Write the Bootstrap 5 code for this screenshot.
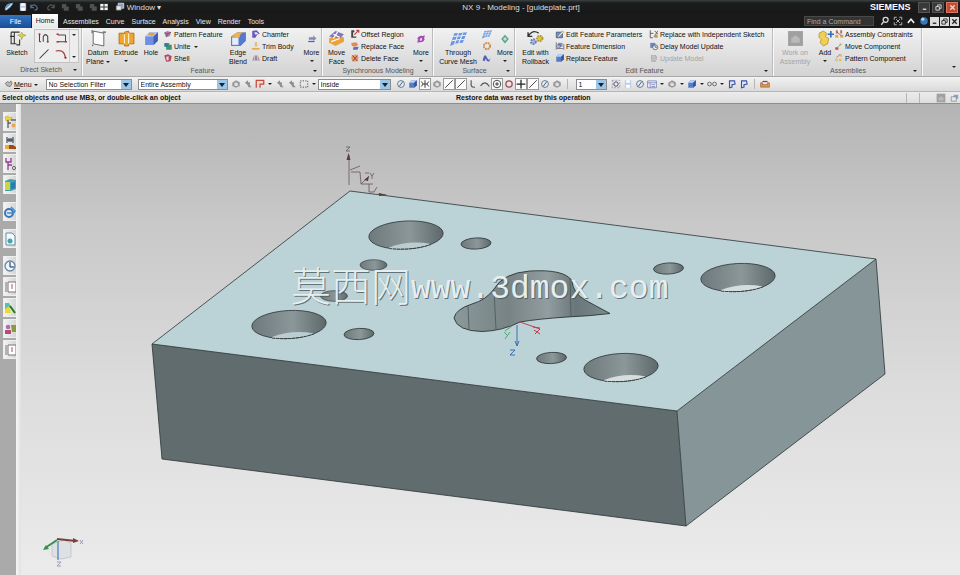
<!DOCTYPE html>
<html lang="en">
<head>
<meta charset="utf-8">
<meta name="viewport" content="width=device-width, initial-scale=1">
<title>NX 9 - Modeling - [guideplate.prt]</title>
<link href="https://cdn.jsdelivr.net/npm/bootstrap@5.3.0/dist/css/bootstrap.min.css" rel="stylesheet">
<style>
body{font-family:"Liberation Sans",Arial,sans-serif;font-size:7px;line-height:9px;color:#111;background:#ababab}
button,select,input{font:inherit;color:inherit;border:0;background:none;padding:0;border-radius:0}
button{white-space:nowrap}
svg.ic{width:10px;height:10px;flex:none;display:block}
svg.ic-l{width:17px;height:17px;flex:none;display:block}
.titlebar{height:14px;background:linear-gradient(#3c4346,#1c1c1c 20%,#181818);color:#ddd;font-size:8px}
.quick{width:172px;padding-left:2px}
.quick button{width:14px;display:flex;justify-content:center}
.quick .wide{width:48px;gap:2px;align-items:center}
.brand{font-size:9px;font-weight:bold;color:#fff;width:48px}
.winbtn{width:12px;height:11px;background:#393939;border:1px solid #555;display:grid;place-items:center;margin-right:2px}
.winbtn.closer{background:#c64a31;border-color:#d8795e}
.tabrow{height:14px;background:#1a1a1a;color:#e6e6e6}
.tabrow a{color:inherit;text-decoration:none;height:13px;line-height:14px;margin-right:7px}
.tabrow .file-tab{background:linear-gradient(#3474c0,#174f98);width:31px;text-align:center;margin-right:1px;color:#fff}
.tabrow .home-tab{background:linear-gradient(#fff,#e8e8e8);color:#111;width:26px;text-align:center;height:14px;margin-right:5px}
.finder{width:70px;height:10px;background:#333;color:#aaa;border:1px solid #484848;padding:0 2px}
.finder::placeholder{color:#aaa;opacity:1}
.tabrow .tool{width:13px;display:grid;place-items:center}
.tabrow .mdi{width:9px;height:9px;margin-right:1px;background:#ddd;display:grid;place-items:center}
.ribbon{height:49px;background:linear-gradient(#f1f1f1,#dfdfe0 60%,#d3d3d4);border-bottom:1px solid #a9a9a9}
.grp{border-right:1px solid #fafafa;box-shadow:inset -1px 0 #bcbcbc;display:flex;flex-direction:column;flex:none}
.grp-body{display:grid;height:37px}
.grp-name{text-align:center;color:#555;position:relative;line-height:12px}
.grp-name::after,.dd::after{content:"";display:inline-block;border:2px solid transparent;border-top-color:#222;border-bottom:0}
.grp-name::after{position:absolute;right:5px;top:5px}
.g-sketch{width:83px}.g-sketch .grp-body{grid-template-columns:34px 45px}
.g-feature{width:240px}.g-feature .grp-body{grid-template-columns:30px 26px 24px 62px 26px 50px 21px}
.g-sync{width:111px}.g-sync .grp-body{grid-template-columns:27px 60px 22px}
.g-surface{width:82px}.g-surface .grp-body{grid-template-columns:48px 13px 20px}
.g-edit{width:258px}.g-edit .grp-body{grid-template-columns:39px 94px 122px}
.g-asm{width:149px}.g-asm .grp-body{grid-template-columns:42px 18px 87px}
.big{display:flex;flex-direction:column;align-items:center;padding-top:2px;line-height:9px}
.big .ic-l{margin-bottom:1px}
.big .ic{margin:4px}
.big .cap{white-space:pre-line;text-align:center}
.dd::after{margin-left:2px;vertical-align:1px}
.under::after{content:"";border:2px solid transparent;border-top-color:#222;border-bottom:0;margin-top:3px}
.small-col{display:flex;flex-direction:column}
.small-col button{display:flex;align-items:center;height:12px;gap:1px;text-align:left}
.off{color:#a4a4a4}
.gallery{border:1px solid #c2c2c2;margin:1px 0;display:grid;grid-template-columns:17px 17px 9px;background:#ededed}
.gallery button{display:grid;place-items:center}
.gallery .scroller{grid-row:span 2;border-left:1px solid #ccc;display:flex;flex-direction:column;justify-content:space-around;align-items:center}
.selbar{height:15px;background:linear-gradient(#f2f2f2,#dadada);border-bottom:1px solid #b5b5b5}
.selbar .bi{width:12px;height:12px;display:grid;place-items:center;flex:none}
.selbar .boxed{background:#fafafa;border:1px solid #999}
.selbar .gapdd{width:8px;height:12px;flex:none;display:grid;place-items:center}
.gapdd::after{content:"";border:2px solid transparent;border-top-color:#222;border-bottom:0}
.selbar .pick{height:11px;line-height:9px;border:1px solid #8c8c8c;padding:0 12px 0 2px;appearance:none;flex:none;
background:#fff url("data:image/svg+xml,%3Csvg xmlns='http://www.w3.org/2000/svg' width='10' height='9'%3E%3Crect width='10' height='9' fill='%239cc5e6'/%3E%3Cpath d='M2 3h6l-3 4z' fill='%23123'/%3E%3C/svg%3E") right center no-repeat}
.p-filter{width:86px;margin-left:5px}.p-scope{width:90px;margin:0 2px 0 6px}.p-inside{width:73px;margin:0 4px 0 0}.p-num{width:31px;margin:0 3px 0 4px}
.vsep{width:1px;height:10px;background:#b5b5b5;margin:0 4px;flex:none}
.prompt{height:12px;background:linear-gradient(#ececec,#dedede);font-weight:bold;border-bottom:1px solid #8e8e8e}
.prompt>*{flex:1 1 0}.prompt .status{flex:1.11 1 0}
.prompt .hint{padding-left:2px}
.workarea{min-height:0}
.rail{width:16px;background:#aaa;padding:8px 0 0 3px;flex:none}
.rail button{width:13px;height:19px;margin-bottom:2px;background:linear-gradient(90deg,#f3f3f3,#d5d5d5);border:1px solid #eee;border-right:0;display:grid;place-items:center}
.rail .spaced{margin-bottom:8px}
.rail svg.ic{width:12px;height:14px}
.edge-strip{width:5px;background:linear-gradient(90deg,#f6f6f6,#e0e0e0);flex:none}
.view{background:linear-gradient(#b4b4b4,#c8c8c8 25%,#dcdcdc 60%,#ebebeb);min-width:0}
.view svg{width:100%;height:100%;display:block}
.wm-cjk{font-family:"Noto Sans CJK SC",sans-serif;font-size:40px;font-weight:300}
.wm-latin{font-family:"Liberation Mono","Courier New",monospace;font-size:33px}
</style>
<script src="https://cdn.jsdelivr.net/npm/bootstrap@5.3.0/dist/js/bootstrap.bundle.min.js"></script>
</head>
<body class="vh-100 d-flex flex-column overflow-hidden">
<svg class="d-none" aria-hidden="true">
<symbol id="sketch" viewBox="0 0 16 16"><path d="M2 2h8M2 2v11h5M5 2v11M1 6h4M10 9v5H7" fill="none" stroke="#333"/><path d="M12 2l1 2 3 1-3 1-1 3-1-3-3-1 3-1z" fill="#e3d33d" stroke="#99902b" stroke-width=".5"/></symbol>
<symbol id="profile" viewBox="0 0 16 16"><path d="M2 13V3M2 13h2M7 13V6q3-5 6 0v7" fill="none" stroke="#444" stroke-width="1.4"/><circle cx="2" cy="3" r="1.4" fill="#a33"/><circle cx="13" cy="13" r="1.4" fill="#a33"/></symbol>
<symbol id="rect" viewBox="0 0 16 16"><path d="M4 4h10v9H3" fill="none" stroke="#444" stroke-width="1.3"/><path d="M2 3h3M2 13h3M13 13h3" stroke="#b33" stroke-width="2"/></symbol>
<symbol id="line" viewBox="0 0 16 16"><path d="M2 14L14 2" stroke="#333" stroke-width="1.4"/></symbol>
<symbol id="arc" viewBox="0 0 16 16"><path d="M1 4q11-3 13 9" fill="none" stroke="#a44" stroke-width="1.6"/><circle cx="14" cy="13" r="1.4" fill="#722"/></symbol>
<symbol id="plane" viewBox="0 0 16 16"><path d="M3 1l10 2v12L3 13z" fill="#fbfbfb" stroke="#555" stroke-width=".8"/><path d="M2 0v3M12 2h3M3 14l-1 1" stroke="#555"/></symbol>
<symbol id="extrude" viewBox="0 0 16 16"><path d="M1 3h4l1 1V2l4-1v2h5v10h-5v2H6v-2H1z" fill="#eea62d" stroke="#b16910" stroke-width=".8"/><path d="M6 4v9M10 3v10" stroke="#fff3d6"/></symbol>
<symbol id="hole" viewBox="0 0 16 16"><path d="M2 6l4-4h8v8l-4 4H2z" fill="#6f8fe0"/><path d="M2 6l4-4h8l-4 4z" fill="#bccbf4"/><path d="M10 6l4-4v8l-4 4z" fill="#3f5fb5"/><ellipse cx="8" cy="4" rx="3" ry="1.3" fill="#e5a23a"/></symbol>
<symbol id="gem" viewBox="0 0 16 16"><path d="M2 6l5-3 6 2-2 6-6 2z" fill="#a9799c"/><path d="M2 6l5 2 6-3M7 8l-2 5" stroke="#5b4155" fill="none"/></symbol>
<symbol id="unite" viewBox="0 0 16 16"><path d="M2 3h8v3h4v8H5V9H2z" fill="#3d9473"/><path d="M3 4h5v5H3z" fill="#446fb5"/></symbol>
<symbol id="shell" viewBox="0 0 16 16"><path d="M2 4l6-2 6 3-2 8-7 1z" fill="#ae4a66"/><path d="M5 6l4-1v6l-3 1z" fill="#f3d4da"/></symbol>
<symbol id="blend" viewBox="0 0 16 16"><path d="M1 6l6-4h8v8l-5 5H1z" fill="#5379d3"/><path d="M1 6l6-4h8q-6 0-6 5z" fill="#edb44c"/><path d="M2 7h6v7H2z" fill="#e4ecfc"/></symbol>
<symbol id="chamfer" viewBox="0 0 16 16"><path d="M2 14V3l7-1 5 5-4 2-3 5z" fill="#6a58b8"/><path d="M5 5h4l3 3-5 1z" fill="#e6e1ff"/></symbol>
<symbol id="trim" viewBox="0 0 16 16"><path d="M6 2h4v7H6z" fill="#dec17f"/><path d="M1 11h14l-3 3H2z" fill="#e4ad52"/></symbol>
<symbol id="draft" viewBox="0 0 16 16"><path d="M2 12l3-8h6l3 8z" fill="#9b8799"/><path d="M6 4l-1 8M10 4l1 8" stroke="#f3e8f0"/></symbol>
<symbol id="moreblue" viewBox="0 0 16 16"><path d="M3 5h7V2l5 5-5 4V9H3z" fill="#7d8dc4"/><path d="M2 12h10" stroke="#6a5592" stroke-width="2"/></symbol>
<symbol id="moreviolet" viewBox="0 0 16 16"><path d="M2 8q2-6 9-5l3-1-1 6H9l1-2q-4 0-4 4zM14 8q-2 6-9 5l-3 1 1-5h4l-1 2q4 0 4-3z" fill="#a54ab4"/></symbol>
<symbol id="moregreen" viewBox="0 0 16 16"><path d="M8 1l6 7-6 7-6-7z" fill="#57a386"/><path d="M8 5v6M5 8h6" stroke="#e9fff4" stroke-width="1.5"/></symbol>
<symbol id="moveface" viewBox="0 0 16 16"><path d="M1 8l7-4 7 3v4l-8 4-6-3z" fill="#eaa33c"/><path d="M1 6l6-5 8 3-4 4z" fill="#8174bd"/><path d="M5 4l6 3M9 2L5 8M3 11l8-3" stroke="#fff" stroke-width="1.2"/></symbol>
<symbol id="offset" viewBox="0 0 16 16"><path d="M2 2h5v3H5v7h5v2H2z" fill="#444"/><path d="M7 9l6-6M10 2h4v4" stroke="#c74340" stroke-width="2" fill="none"/></symbol>
<symbol id="repface" viewBox="0 0 16 16"><path d="M2 3l8-1 3 4-4 3-6-1z" fill="#dd8b50"/><path d="M5 10l9-1-2 5H5z" fill="#5e6fba"/></symbol>
<symbol id="delface" viewBox="0 0 16 16"><path d="M3 4l7-2 4 5-2 6-7 1-3-5z" fill="#de9d6b"/><path d="M4 4l8 9M12 4l-8 9" stroke="#9d352c" stroke-width="1.5"/></symbol>
<symbol id="mesh" viewBox="0 0 16 16"><path d="M4 3q6 0 12-1l-4 10q-6 0-12 3z" fill="#6d95da"/><path d="M3 6q6 0 12-1M2 10q6-1 11-1M8 3L4 14M12 3L8 13" stroke="#e5efff" fill="none"/></symbol>
<symbol id="patch" viewBox="0 0 16 16"><circle cx="8" cy="8" r="5" fill="none" stroke="#d08b52" stroke-width="3" stroke-dasharray="3 1"/></symbol>
<symbol id="wave" viewBox="0 0 16 16"><path d="M1 12q3-14 7-5t7-4l-3 10q-4 2-6-4l-2 4z" fill="#5760b9"/></symbol>
<symbol id="rollback" viewBox="0 0 16 16"><path d="M1 2v4h4M1 6q4-7 10-3" fill="none" stroke="#333" stroke-width="1.3"/><circle cx="12" cy="8" r="2.500" fill="#e3c83f" stroke="#b39a33" stroke-dasharray="1.500 .8" stroke-width="2"/><circle cx="6" cy="11" r="2.200" fill="#a9bde4" stroke="#6a80b5" stroke-dasharray="1.500 .8" stroke-width="2"/></symbol>
<symbol id="cube" viewBox="0 0 16 16"><path d="M2 6l4-4h8v8l-4 4H2z" fill="#537dc5"/><path d="M2 6l4-4h8l-4 4z" fill="#bdd3f4"/><path d="M10 6v8l4-4V2z" fill="#33559a"/></symbol>
<symbol id="editp" viewBox="0 0 16 16"><path d="M2 5h10v9H2z" fill="#6893d2" stroke="#345"/><path d="M4 12l8-9 2 2-8 8z" fill="#f5f0d1" stroke="#555" stroke-width=".7"/></symbol>
<symbol id="dim" viewBox="0 0 16 16"><path d="M2 2v12M14 5v9M3 12h10" stroke="#445"/><path d="M5 3h7v6H5z" fill="#7993c9"/><circle cx="6" cy="8" r="3" fill="none" stroke="#556"/></symbol>
<symbol id="indep" viewBox="0 0 16 16"><path d="M2 2v12h4M2 7h5M9 3l5 5M14 3L8 13" stroke="#555" stroke-width="1.4" fill="none"/><path d="M9 9h5v5H9z" fill="#c99b57"/></symbol>
<symbol id="delay" viewBox="0 0 16 16"><path d="M2 3h8v8H2z" fill="#6b86bd"/><circle cx="10" cy="10" r="4" fill="#e6eaf5" stroke="#345"/><path d="M10 7v3h3" stroke="#333" fill="none"/></symbol>
<symbol id="update" viewBox="0 0 16 16"><path d="M3 3h8l2 4-2 7H4z" fill="#aaa"/><path d="M4 5h6M5 8h7M5 11h6" stroke="#eee"/></symbol>
<symbol id="workon" viewBox="0 0 16 16"><path d="M1 1h14v14H1z" fill="#a0a0a0"/><path d="M4 8l4-3 4 3v4H4z" fill="#b9b9b9"/></symbol>
<symbol id="add" viewBox="0 0 16 16"><path d="M2 3l4-2 3 2-1 3 3 2-1 5-4 2-3-3 1-3-2-2z" fill="#efd055" stroke="#ad8a23" stroke-width=".7"/><path d="M10 4h6M13 1v6" stroke="#346fb9" stroke-width="1.6"/></symbol>
<symbol id="constr" viewBox="0 0 16 16"><path d="M3 2h3v5H3zM10 2h3v5h-3z" fill="#c26657"/><path d="M2 9h5v5H2zM10 9h5v5h-5z" fill="#d9ad5d"/><path d="M5 5l7 6" stroke="#444"/></symbol>
<symbol id="movec" viewBox="0 0 16 16"><path d="M2 10h5v4H2z" fill="#c55249"/><path d="M9 4h3v3H9z" fill="#d6a44f"/><path d="M6 10l4-4" stroke="#777"/></symbol>
<symbol id="pattc" viewBox="0 0 16 16"><path d="M2 9h4v4H2zM8 9h4v4H8zM9 2h4v4H9z" fill="#e3be61"/><path d="M4 7l6-5" stroke="#b36" stroke-width="1"/></symbol>
<symbol id="save" viewBox="0 0 16 16"><path d="M3 2h10v12H3z" fill="#b9cde9"/><path d="M5 2h6v4H5zM5 9h6v5H5z" fill="#fff"/></symbol>
<symbol id="logo" viewBox="0 0 16 16"><path d="M1 12q1-9 8-10l6-1-5 8-7 5z" fill="#5c94be"/><path d="M3 12L13 3" stroke="#d7eef9" stroke-width="2"/></symbol>
<symbol id="undo" viewBox="0 0 16 16"><path d="M3 4v5h5M3 8q5-6 9-1t-3 6" fill="none" stroke="#4d7190" stroke-width="2"/></symbol>
<symbol id="redo" viewBox="0 0 16 16"><path d="M13 4v5H8M13 8Q8 2 4 7t3 6" fill="none" stroke="#555" stroke-width="2"/></symbol>
<symbol id="dark" viewBox="0 0 16 16"><path d="M3 3h7v4h4v7H6v-4H3z" fill="#505050"/></symbol>
<symbol id="grid" viewBox="0 0 16 16"><path d="M2 3h12v10H2z" fill="#f4f4f4"/><path d="M8 3v10M2 8h12" stroke="#333" stroke-width="1.6"/></symbol>
<symbol id="win" viewBox="0 0 16 16"><path d="M5 2h9v8H5z" fill="#8da4c8" stroke="#fff"/><path d="M2 6h8v7H2z" fill="#e7e7e7" stroke="#777"/></symbol>
<symbol id="find" viewBox="0 0 16 16"><circle cx="9" cy="6" r="4" fill="none" stroke="#ddd" stroke-width="2"/><path d="M6 9l-4 5" stroke="#ddd" stroke-width="2"/></symbol>
<symbol id="full" viewBox="0 0 16 16"><path d="M2 6V2h4M10 2h4v4M14 10v4h-4M6 14H2v-4M5 5l6 6M11 5l-6 6" stroke="#bbb" stroke-width="1.5" fill="none"/></symbol>
<symbol id="up" viewBox="0 0 16 16"><path d="M3 11l5-6 5 6" stroke="#eee" stroke-width="2.5" fill="none"/></symbol>
<symbol id="help" viewBox="0 0 16 16"><circle cx="8" cy="8" r="6" fill="#3b76b8"/><circle cx="6" cy="5" r="2.5" fill="#aed6f8"/></symbol>
<symbol id="min" viewBox="0 0 16 16"><path d="M4 12h8" stroke="currentColor" stroke-width="3"/></symbol>
<symbol id="rest" viewBox="0 0 16 16"><path d="M6 6V2h8v8h-4M2 6h8v8H2z" fill="none" stroke="currentColor" stroke-width="2"/></symbol>
<symbol id="x" viewBox="0 0 16 16"><path d="M3 3l10 10M13 3L3 13" stroke="currentColor" stroke-width="3"/></symbol>
<symbol id="menu" viewBox="0 0 16 16"><path d="M2 7l4-3 3 2 2-3 2 4-3 5-5-1z" fill="#bbb" stroke="#555"/></symbol>
<symbol id="graypart" viewBox="0 0 16 16"><path d="M2 6l6-4 6 3v6l-6 3-6-3z" fill="#999"/><path d="M5 7l3-2 3 2v4H6z" fill="#ddd"/></symbol>
<symbol id="grayarrow" viewBox="0 0 16 16"><path d="M3 6l5-4v3h3v5l3 3H9L7 9z" fill="#8e8e8e"/></symbol>
<symbol id="redsel" viewBox="0 0 16 16"><path d="M2 14V2h12v6H8v6" fill="#f5dad3" stroke="#c9483b" stroke-width="2"/></symbol>
<symbol id="dash" viewBox="0 0 16 16"><path d="M2 3h12v10H2z" fill="none" stroke="#555" stroke-dasharray="2 2" stroke-width="1.6"/></symbol>
<symbol id="dial" viewBox="0 0 16 16"><circle cx="8" cy="8" r="5.5" fill="#e1edf8" stroke="#678" stroke-width="1.5"/><path d="M5 12l6-8" stroke="#456" stroke-width="1.5"/></symbol>
<symbol id="snap" viewBox="0 0 16 16"><path d="M2 4l3 4-3 4M14 4l-3 4 3 4M8 2v12M5 8h6" fill="none" stroke="#333" stroke-width="1.5"/></symbol>
<symbol id="hook" viewBox="0 0 16 16"><path d="M5 2v8q1 4 6 3" fill="none" stroke="#555" stroke-width="1.8"/></symbol>
<symbol id="hill" viewBox="0 0 16 16"><path d="M1 11q7-10 14 1" fill="none" stroke="#555" stroke-width="1.8"/></symbol>
<symbol id="center" viewBox="0 0 16 16"><circle cx="8" cy="8" r="6" fill="none" stroke="#444" stroke-width="1.5"/><path d="M8 5v6M5 8h6" stroke="#333" stroke-width="1.5"/></symbol>
<symbol id="ring" viewBox="0 0 16 16"><circle cx="8" cy="8" r="5" fill="none" stroke="#a64454" stroke-width="2"/></symbol>
<symbol id="plus" viewBox="0 0 16 16"><path d="M8 1v14M1 8h14" stroke="#222" stroke-width="2"/></symbol>
<symbol id="zoomfit" viewBox="0 0 16 16"><path d="M2 2h12v12H2z" fill="none" stroke="#778" stroke-dasharray="3 2"/><circle cx="8" cy="8" r="3.5" fill="#e8eef8" stroke="#446" stroke-width="1.5"/></symbol>
<symbol id="table" viewBox="0 0 16 16"><path d="M1 3h14v11H1z" fill="#f2f2ff" stroke="#5264a4"/><path d="M1 6h14M5 6v8M7 9h6M7 12h6" stroke="#5264a4"/></symbol>
<symbol id="glasses" viewBox="0 0 16 16"><circle cx="4" cy="8" r="3" fill="none" stroke="#666" stroke-width="1.5"/><circle cx="12" cy="8" r="3" fill="none" stroke="#666" stroke-width="1.5"/></symbol>
<symbol id="clip" viewBox="0 0 16 16"><path d="M4 14V3h8l1 5-5 1v4z" fill="#dce7ff" stroke="#3d52a0" stroke-width="1.8"/></symbol>
<symbol id="measure" viewBox="0 0 16 16"><path d="M1 6v7h14V6h-3v3H4V6z" fill="#dc9a55" stroke="#9b5525"/><path d="M4 4h8" stroke="#a33" stroke-width="2"/></symbol>
<symbol id="r-asm" viewBox="0 0 12 14"><path d="M1 2l3-1 2 2 2-1v3H4L2 6z" fill="#ead546" stroke="#b2a126" stroke-width=".5"/><path d="M4 5v8M4 8h3M7 5h5" stroke="#333"/><circle cx="9.500" cy="10.500" r="2" fill="#e8a55b"/></symbol>
<symbol id="r-con" viewBox="0 0 12 14"><path d="M3 1v6M9 1v6M3 4h6M5 2v4M7 2v4" stroke="#234" stroke-width="1"/><path d="M1 9h8l3 2v2H1z" fill="#9b4a1c"/><path d="M1 9h4v4H1z" fill="#e8aa3e"/></symbol>
<symbol id="r-part" viewBox="0 0 12 14"><path d="M2 1v4h5V1M4 5v8M4 8h4" stroke="#8f3c98" fill="none" stroke-width="1.3"/><circle cx="10" cy="11" r="1.600" fill="none" stroke="#665"/></symbol>
<symbol id="r-reuse" viewBox="0 0 12 14"><path d="M1 3l5-2 6 1v9l-5 2H1z" fill="#42a0a9"/><path d="M1 4h5v8H1z" fill="#c9d64c"/><path d="M7 5l4-1v6l-4 1z" fill="#2c78b9"/></symbol>
<symbol id="r-ie" viewBox="0 0 12 14"><circle cx="5" cy="8" r="4" fill="none" stroke="#3776b7" stroke-width="2"/><path d="M3 8h5M7 2l4 4-3 4" stroke="#3f8cc9" stroke-width="1.5" fill="none"/></symbol>
<symbol id="r-doc" viewBox="0 0 12 14"><path d="M2 1h6l3 3v9H2z" fill="#f4fbff" stroke="#608da4"/><circle cx="6" cy="9" r="2.500" fill="#4ca2a8"/></symbol>
<symbol id="r-clock" viewBox="0 0 12 14"><circle cx="6" cy="7" r="5" fill="#ebf5fc" stroke="#6786a4" stroke-width="1.3"/><path d="M6 3v5h4" fill="none" stroke="#224"/></symbol>
<symbol id="r-tab" viewBox="0 0 12 14"><path d="M2 2v10M4 2h8v10H4z" fill="#fff" stroke="#777"/><path d="M8 4v5" stroke="#a55"/></symbol>
<symbol id="r-vis" viewBox="0 0 12 14"><path d="M1 2h4l2 4-6 3z" fill="#4fc0c1"/><path d="M1 8l4-3 2 7H1z" fill="#e5da38"/><path d="M6 5l5 7" stroke="#272" stroke-width="2"/></symbol>
<symbol id="r-role" viewBox="0 0 12 14"><circle cx="4" cy="5" r="2.300" fill="#ad71a9"/><path d="M1 12V8h6v4z" fill="#b34d75"/><path d="M7 3h5v7H8z" fill="#8a9b3c"/></symbol>
</svg>

<header class="titlebar d-flex align-items-center flex-shrink-0">
 <div class="quick d-flex align-items-center">
  <button aria-label="NX"><svg class="ic"><use href="#logo"/></svg></button>
  <button aria-label="Save"><svg class="ic"><use href="#save"/></svg></button>
  <button class="dd" aria-label="Undo"><svg class="ic"><use href="#undo"/></svg></button>
  <button aria-label="Redo"><svg class="ic"><use href="#redo"/></svg></button>
  <button aria-label="Cut"><svg class="ic"><use href="#dark"/></svg></button>
  <button aria-label="Copy"><svg class="ic"><use href="#dark"/></svg></button>
  <button aria-label="Paste"><svg class="ic"><use href="#dark"/></svg></button>
  <button class="dd text-white" aria-label="Touch mode"><svg class="ic"><use href="#grid"/></svg></button>
  <button class="wide"><svg class="ic"><use href="#win"/></svg>Window ▾</button>
 </div>
 <div class="flex-grow-1 text-center">NX 9 - Modeling - [guideplate.prt]</div>
 <div class="brand">SIEMENS</div>
 <button class="winbtn" aria-label="Minimize"><svg width="7" height="7"><use href="#min"/></svg></button>
 <button class="winbtn" aria-label="Restore"><svg width="7" height="7"><use href="#rest"/></svg></button>
 <button class="winbtn closer" aria-label="Close"><svg width="7" height="7"><use href="#x"/></svg></button>
</header>

<nav class="tabrow d-flex align-items-center flex-shrink-0">
 <a href="#" class="file-tab">File</a><a href="#" class="home-tab">Home</a><a href="#">Assemblies</a><a href="#">Curve</a><a href="#">Surface</a><a href="#">Analysis</a><a href="#">View</a><a href="#">Render</a><a href="#">Tools</a>
 <input class="finder ms-auto me-1" aria-label="Find a Command" placeholder="Find a Command">
 <button class="tool" aria-label="Search"><svg class="ic"><use href="#find"/></svg></button>
 <button class="tool" aria-label="Full screen"><svg class="ic"><use href="#full"/></svg></button>
 <button class="tool" aria-label="Minimize ribbon"><svg class="ic"><use href="#up"/></svg></button>
 <button class="tool" aria-label="Help"><svg class="ic"><use href="#help"/></svg></button>
 <button class="mdi text-dark" aria-label="Minimize part"><svg width="7" height="7"><use href="#min"/></svg></button>
 <button class="mdi text-dark" aria-label="Restore part"><svg width="7" height="7"><use href="#rest"/></svg></button>
 <button class="mdi text-dark" aria-label="Close part"><svg width="7" height="7"><use href="#x"/></svg></button>
</nav>

<div class="ribbon d-flex flex-shrink-0">
 <section class="grp g-sketch"><div class="grp-body">
  <button class="big"><svg class="ic-l"><use href="#sketch"/></svg><span class="cap">Sketch</span></button>
  <div class="gallery">
   <button aria-label="Profile"><svg width="12" height="12"><use href="#profile"/></svg></button><button aria-label="Rectangle"><svg width="12" height="12"><use href="#rect"/></svg></button><button class="scroller under" aria-label="More curves"><span class="gapdd"></span></button>
   <button aria-label="Line"><svg width="12" height="12"><use href="#line"/></svg></button><button aria-label="Arc"><svg width="12" height="12"><use href="#arc"/></svg></button>
  </div></div>
  <div class="grp-name">Direct Sketch</div></section>

 <section class="grp g-feature"><div class="grp-body">
  <button class="big"><svg class="ic-l"><use href="#plane"/></svg><span class="cap dd">Datum
Plane</span></button>
  <button class="big under"><svg class="ic-l"><use href="#extrude"/></svg><span class="cap">Extrude</span></button>
  <button class="big"><svg class="ic-l"><use href="#hole"/></svg><span class="cap">Hole</span></button>
  <div class="small-col"><button><svg class="ic"><use href="#gem"/></svg>Pattern Feature</button><button><svg class="ic"><use href="#unite"/></svg><span class="dd">Unite </span></button><button><svg class="ic"><use href="#shell"/></svg>Shell</button></div>
  <button class="big"><svg class="ic-l"><use href="#blend"/></svg><span class="cap">Edge
Blend</span></button>
  <div class="small-col"><button><svg class="ic"><use href="#chamfer"/></svg>Chamfer</button><button><svg class="ic"><use href="#trim"/></svg>Trim Body</button><button><svg class="ic"><use href="#draft"/></svg>Draft</button></div>
  <button class="big under"><svg class="ic"><use href="#moreblue"/></svg><span class="cap">More</span></button></div>
  <div class="grp-name">Feature</div></section>

 <section class="grp g-sync"><div class="grp-body">
  <button class="big"><svg class="ic-l"><use href="#moveface"/></svg><span class="cap">Move
Face</span></button>
  <div class="small-col"><button><svg class="ic"><use href="#offset"/></svg>Offset Region</button><button><svg class="ic"><use href="#repface"/></svg>Replace Face</button><button><svg class="ic"><use href="#delface"/></svg>Delete Face</button></div>
  <button class="big under"><svg class="ic"><use href="#moreviolet"/></svg><span class="cap">More</span></button></div>
  <div class="grp-name">Synchronous Modeling</div></section>

 <section class="grp g-surface"><div class="grp-body">
  <button class="big"><svg class="ic-l"><use href="#mesh"/></svg><span class="cap">Through
Curve Mesh</span></button>
  <div class="small-col"><button aria-label="Ruled"><svg class="ic"><use href="#mesh"/></svg></button><button aria-label="Fill surface"><svg class="ic"><use href="#patch"/></svg></button><button aria-label="Studio surface"><svg class="ic"><use href="#wave"/></svg></button></div>
  <button class="big under"><svg class="ic"><use href="#moregreen"/></svg><span class="cap">More</span></button></div>
  <div class="grp-name">Surface</div></section>

 <section class="grp g-edit"><div class="grp-body">
  <button class="big"><svg class="ic-l"><use href="#rollback"/></svg><span class="cap">Edit with
Rollback</span></button>
  <div class="small-col"><button><svg class="ic"><use href="#editp"/></svg>Edit Feature Parameters</button><button><svg class="ic"><use href="#dim"/></svg>Feature Dimension</button><button><svg class="ic"><use href="#cube"/></svg>Replace Feature</button></div>
  <div class="small-col"><button><svg class="ic"><use href="#indep"/></svg>Replace with Independent Sketch</button><button><svg class="ic"><use href="#delay"/></svg>Delay Model Update</button><button class="off"><svg class="ic"><use href="#update"/></svg>Update Model</button></div></div>
  <div class="grp-name">Edit Feature</div></section>

 <section class="grp g-asm"><div class="grp-body">
  <button class="big off"><svg class="ic-l"><use href="#workon"/></svg><span class="cap">Work on
Assembly</span></button>
  <button class="big under"><svg class="ic-l"><use href="#add"/></svg><span class="cap">Add</span></button>
  <div class="small-col"><button><svg class="ic"><use href="#constr"/></svg>Assembly Constraints</button><button><svg class="ic"><use href="#movec"/></svg>Move Component</button><button><svg class="ic"><use href="#pattc"/></svg>Pattern Component</button></div></div>
  <div class="grp-name">Assemblies</div></section>
 <button class="gapdd ms-auto align-self-end me-1" aria-label="Ribbon options"></button>
</div>

<div class="selbar d-flex align-items-center flex-shrink-0">
 <button class="d-flex align-items-center ms-1"><svg class="ic"><use href="#menu"/></svg><span class="dd"><u>M</u>enu</span></button>
 <select class="pick p-filter ms-2" aria-label="Type filter"><option>No Selection Filter</option></select>
 <select class="pick p-scope" aria-label="Selection scope"><option>Entire Assembly</option></select>
 <button class="bi" aria-label="Highlight"><svg class="ic"><use href="#graypart"/></svg></button><button class="bi" aria-label="Pointer"><svg class="ic"><use href="#grayarrow"/></svg></button><button class="bi" aria-label="Detail filter"><svg class="ic"><use href="#redsel"/></svg></button><button class="gapdd" aria-label="Filter options"></button><button class="bi" aria-label="Reset"><svg class="ic"><use href="#grayarrow"/></svg></button><button class="bi" aria-label="Deselect"><svg class="ic"><use href="#grayarrow"/></svg></button><button class="bi" aria-label="Rectangle select"><svg class="ic"><use href="#dash"/></svg></button><button class="gapdd" aria-label="Select options"></button>
 <select class="pick p-inside" aria-label="Selection rule"><option>Inside</option></select>
 <button class="bi" aria-label="Faces"><svg class="ic"><use href="#dial"/></svg></button><button class="bi" aria-label="Solid"><svg class="ic"><use href="#cube"/></svg></button><button class="bi boxed" aria-label="Snap point"><svg class="ic"><use href="#snap"/></svg></button><button class="bi" aria-label="Clear snap"><svg class="ic"><use href="#graypart"/></svg></button><button class="bi boxed" aria-label="End point"><svg class="ic"><use href="#line"/></svg></button><button class="bi boxed" aria-label="Mid point"><svg class="ic"><use href="#line"/></svg></button><button class="bi" aria-label="Control point"><svg class="ic"><use href="#hook"/></svg></button><button class="bi" aria-label="Spline"><svg class="ic"><use href="#hill"/></svg></button><button class="bi boxed" aria-label="Arc centre"><svg class="ic"><use href="#center"/></svg></button><button class="bi" aria-label="Quadrant"><svg class="ic"><use href="#ring"/></svg></button><button class="bi boxed" aria-label="Existing point"><svg class="ic"><use href="#plus"/></svg></button><button class="bi boxed" aria-label="Point on curve"><svg class="ic"><use href="#line"/></svg></button><button class="bi" aria-label="Point on face"><svg class="ic"><use href="#dial"/></svg></button><button class="bi" aria-label="Grid point"><svg class="ic"><use href="#graypart"/></svg></button>
 <span class="vsep"></span>
 <select class="pick p-num" aria-label="Work layer"><option>1</option></select>
 <button class="bi" aria-label="Fit"><svg class="ic"><use href="#zoomfit"/></svg></button><button class="bi" aria-label="Zoom"><svg class="ic"><use href="#save"/></svg></button><button class="bi" aria-label="Rotate"><svg class="ic"><use href="#dial"/></svg></button><button class="bi" aria-label="Layers"><svg class="ic"><use href="#table"/></svg></button><button class="gapdd" aria-label="Layer options"></button><button class="bi" aria-label="Orient"><svg class="ic"><use href="#graypart"/></svg></button><button class="gapdd" aria-label="Orient options"></button><button class="bi" aria-label="Shaded"><svg class="ic"><use href="#cube"/></svg></button><button class="gapdd" aria-label="Style options"></button><button class="bi" aria-label="Show and hide"><svg class="ic"><use href="#glasses"/></svg></button><button class="gapdd" aria-label="Show options"></button><button class="bi" aria-label="Clip section"><svg class="ic"><use href="#clip"/></svg></button><button class="bi" aria-label="Edit section"><svg class="ic"><use href="#clip"/></svg></button>
 <span class="vsep"></span>
 <button class="bi" aria-label="Measure"><svg class="ic"><use href="#measure"/></svg></button>
</div>

<div class="prompt d-flex align-items-center flex-shrink-0">
 <div class="hint">Select objects and use MB3, or double-click an object</div>
 <div class="status d-flex align-items-center">Restore data was reset by this operation <span class="vsep ms-auto me-2"></span><span class="vsep me-3"></span><svg class="ic me-1"><use href="#workon"/></svg><svg class="ic"><use href="#win"/></svg></div>
</div>

<main class="workarea d-flex flex-grow-1">
 <aside class="rail">
  <button aria-label="Assembly Navigator"><svg class="ic"><use href="#r-asm"/></svg></button>
  <button aria-label="Constraint Navigator"><svg class="ic"><use href="#r-con"/></svg></button>
  <button aria-label="Part Navigator"><svg class="ic"><use href="#r-part"/></svg></button>
  <button class="spaced" aria-label="Reuse Library"><svg class="ic"><use href="#r-reuse"/></svg></button>
  <button class="spaced" aria-label="Web Browser"><svg class="ic"><use href="#r-ie"/></svg></button>
  <button class="spaced" aria-label="HD3D Tools"><svg class="ic"><use href="#r-doc"/></svg></button>
  <button aria-label="History"><svg class="ic"><use href="#r-clock"/></svg></button>
  <button aria-label="Process Studio"><svg class="ic"><use href="#r-tab"/></svg></button>
  <button aria-label="System Materials"><svg class="ic"><use href="#r-vis"/></svg></button>
  <button aria-label="Roles"><svg class="ic"><use href="#r-role"/></svg></button>
  <button aria-label="System Scenes"><svg class="ic"><use href="#r-tab"/></svg></button>
 </aside>
 <div class="edge-strip"></div>
 <div class="view flex-grow-1">
 <svg viewBox="21 104 939 471" role="img" aria-label="Guide plate model">
  <defs>
   <linearGradient id="wall"><stop offset="0" stop-color="#6d797b"/><stop offset=".55" stop-color="#8b9799"/><stop offset="1" stop-color="#5c686a"/></linearGradient>
   <linearGradient id="pocket"><stop offset="0" stop-color="#8b999b"/><stop offset=".35" stop-color="#778385"/><stop offset=".6" stop-color="#929da0"/><stop offset=".78" stop-color="#69767a"/><stop offset="1" stop-color="#7f8c8e"/></linearGradient>
   <g id="bore"><ellipse rx="37.200" ry="14" transform="rotate(-3)" fill="url(#wall)" stroke="#2d3536" stroke-width=".8"/><path d="M-17 12.500Q3 5 25 9Q10 15-17 13.500z" fill="currentColor"/><path d="M-17 13.500Q6 16 25 9.500" fill="none" stroke="#2d3536" stroke-width=".8" stroke-dasharray="3 1"/></g>
   <ellipse id="pin" rx="15" ry="5.600" transform="rotate(-3)" fill="url(#wall)" stroke="#2d3536" stroke-width=".8"/>
  </defs>
  <path d="M350 191L876 259 677 411 152 344z" fill="#bbd2d6"/>
  <path d="M152 344L677 411 686 526 162 459z" fill="#616c6f"/>
  <path d="M677 411L876 259 885 374 686 526z" fill="#869698"/>
  <path d="M350 191L876 259 677 411 152 344zM152 344L162 459 686 526 677 411M686 526L885 374 876 259" fill="none" stroke="#2b3334" stroke-width=".8"/>
  <g color="#bbcdd0"><use href="#bore" x="406" y="235"/><use href="#bore" x="289" y="324.500"/></g>
  <g color="#d5dddd"><use href="#bore" x="738" y="277.500"/><use href="#bore" x="621" y="367.500"/></g>
  <use href="#pin" x="476" y="243.500"/><use href="#pin" x="359" y="334"/><use href="#pin" x="668.500" y="268.500"/><use href="#pin" x="551.500" y="358"/>
  <ellipse cx="373.500" cy="265" rx="13.500" ry="5.300" fill="url(#wall)" stroke="#3a4445" stroke-width=".7"/>
  <ellipse cx="334" cy="296" rx="13.500" ry="5.300" fill="url(#wall)" stroke="#3a4445" stroke-width=".7"/>
  <path d="M454 318Q456 309 472 304Q486 300 494 289Q503 273 530 271Q565 269 572 281Q573 293 585 300Q596 306 610 313.500Q590 316 567 317Q537 319 520 322Q502 331 482 331.500Q457 331 454 318z" fill="url(#pocket)" stroke="#2d3536" stroke-width=".9"/>
  <path d="M468 306l1 23M494 290l2 39M570 278l1 39" stroke="#4a5557" stroke-width=".8"/>
  <g fill="none" stroke-width="1"><path d="M520 322l20 7M533 327l7 1M534 330l6 4m0-5l-5 5" stroke="#bd3e4d"/><path d="M517 325v21m-2-5l2 5 2-5M510 350h5l-5 5h5" stroke="#3d70ac"/><path d="M512 326l-7 5M504 332l3 3m3-3l-5 7" stroke="#50a96a"/></g>
  <g fill="none" stroke="#6b5456" stroke-width=".8"><path d="M349 155v30M346 147h4l-4 4h4M350 170l10-4M351 172h9l1 12M361 184l8-8M365 173h4M370 173l2 3 2-3m-2 3v3M361 184h12M369 184v8h5l3-5M378 194l8 1" /></g>
  <path d="M348.500 153l2 7h-4zM369 176l-1 5-4-1zM379 193l8 2-8 1z" fill="#593c3d"/>
  <g><path d="M52 544l12-4 7 3v14l-10 2-9-3z" fill="#dde0e5" stroke="#bbb" stroke-width=".7"/><path d="M57 540l-12 8" stroke="#3d8c55" stroke-width="2"/><path d="M43 550l3-5 3 4z" fill="#3d8c55"/><path d="M57 539l19 2" stroke="#7c4038" stroke-width="2"/><path d="M73 538l6 3-6 2z" fill="#7c4038"/><path d="M58 541v19" stroke="#5683bb" stroke-width="1.300"/><path d="M57 562h4l-4 4h4M80 540l3 4m0-4l-3 4" stroke="#999fb5" fill="none"/></g>
  <g fill="#465357" fill-opacity=".75"><text class="wm-cjk" x="292" y="302">莫西网</text><text class="wm-latin" x="412" y="299">www.3dmox.com</text></g>
  <g fill="#e6eff0"><text class="wm-cjk" x="291" y="301">莫西网</text><text class="wm-latin" x="411" y="298">www.3dmox.com</text></g>
 </svg>
 </div>
</main>
</body>
</html>
